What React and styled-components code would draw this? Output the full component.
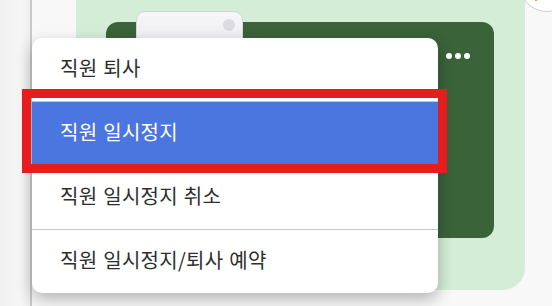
import React from "react";
import styled, { createGlobalStyle } from "styled-components";

const Global = createGlobalStyle`
  html, body { margin: 0; padding: 0; }
  body {
    width: 552px;
    height: 306px;
    overflow: hidden;
    font-family: "Noto Sans CJK KR", "Noto Sans", sans-serif;
  }
`;

const Page = styled.div`
  position: relative;
  display: flex;
  width: 552px;
  height: 306px;
  overflow: hidden;
  background: #f7f7f7;
`;

const Sidebar = styled.div`
  width: 30px;
  flex: none;
  background: linear-gradient(to right, #f1f1f1, #f6f6f6 70%, #efefef);
  border-right: 2px solid #c9c9c9;
`;

const Content = styled.div`
  flex: 1;
  display: flex;
  align-items: flex-start;
  padding-left: 44px;
  background: #f8f8f8;
`;

const GreenPanel = styled.div`
  position: relative;
  width: 449px;
  height: 290px;
  box-sizing: border-box;
  padding: 22px 30px 0;
  background: #d3edd6;
  border-bottom-right-radius: 22px;
`;

const DarkCard = styled.div`
  display: flex;
  justify-content: flex-end;
  align-items: flex-start;
  width: 388px;
  height: 216px;
  box-sizing: border-box;
  padding: 31px 24px;
  border-radius: 12px;
  background: #3a6339;
`;

const Dots = styled.div`
  display: flex;
  gap: 3px;
`;

const Dot = styled.span`
  width: 6px;
  height: 6px;
  border-radius: 50%;
  background: #ffffff;
`;

const Tab = styled.div`
  position: absolute;
  left: 60px;
  top: 11px;
  display: flex;
  justify-content: flex-end;
  align-items: flex-start;
  width: 107px;
  height: 40px;
  box-sizing: border-box;
  padding: 7px;
  border: 1px solid #d6d6d8;
  border-radius: 9px;
  background: linear-gradient(#f7f7f9, #ececef);
`;

const TabKnob = styled.span`
  width: 12px;
  height: 12px;
  border-radius: 50%;
  background: #dcdce0;
`;

const CornerButton = styled.div`
  position: absolute;
  left: 519px;
  top: -44px;
  display: flex;
  align-items: flex-end;
  width: 56px;
  height: 56px;
  box-sizing: border-box;
  padding: 0 0 10px 15px;
  border-radius: 50%;
  border: 1px solid #cfcfcf;
  background: #ffffff;
`;

const CornerMark = styled.span`
  width: 2px;
  height: 3px;
  background: #e39a3a;
`;

const Menu = styled.ul`
  position: absolute;
  left: 32px;
  top: 38px;
  width: 406px;
  margin: 0;
  padding: 0;
  list-style: none;
  background: #ffffff;
  border-radius: 10px;
  box-shadow: 0 6px 16px rgba(0, 0, 0, 0.28);
  overflow: hidden;
`;

const Item = styled.li`
  height: ${(p) => (p.$divider ? "64px" : "63px")};
  box-sizing: border-box;
  display: flex;
  align-items: center;
  padding: 0 28px 5px;
  font-size: 20px;
  letter-spacing: 0.3px;
  word-spacing: 1px;
  color: ${(p) => (p.$active ? "#ffffff" : "#2e2e2e")};
  background: ${(p) => (p.$active ? "#4b75df" : "transparent")};
  border-top: ${(p) => (p.$divider ? "1px solid #c8c8c8" : "none")};
  white-space: nowrap;
`;

const Highlight = styled.div`
  position: absolute;
  left: 22px;
  top: 89px;
  width: 425px;
  height: 84px;
  box-sizing: border-box;
  border: 9px solid #e61d1f;
  pointer-events: none;
`;

export default function App() {
  return (
    <>
      <Global />
      <Page>
        <Sidebar />
        <Content>
          <GreenPanel>
            <DarkCard>
              <Dots>
                <Dot />
                <Dot />
                <Dot />
              </Dots>
            </DarkCard>
            <Tab>
              <TabKnob />
            </Tab>
          </GreenPanel>
        </Content>
        <CornerButton>
          <CornerMark />
        </CornerButton>
        <Menu>
          <Item>직원 퇴사</Item>
          <Item $divider $active>직원 일시정지</Item>
          <Item $divider>직원 일시정지 취소</Item>
          <Item $divider>직원 일시정지/퇴사 예약</Item>
        </Menu>
        <Highlight />
      </Page>
    </>
  );
}
